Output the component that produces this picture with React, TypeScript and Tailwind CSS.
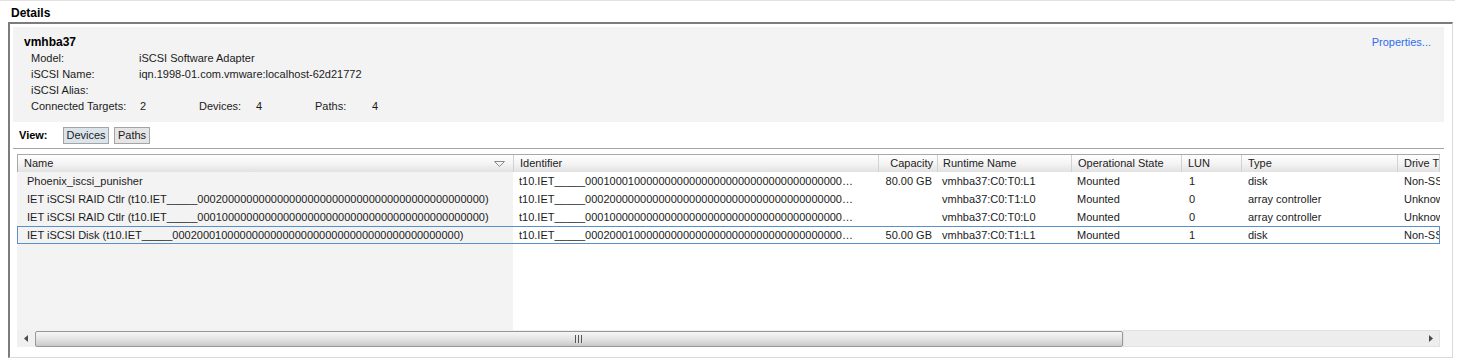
const zeros = (n: number) => "0".repeat(n)

const cols = [
  { label: "Name", w: "w-[496px]", head: "pl-[6px] pr-[8px] justify-between", cell: "pl-[10px] bg-[#f3f3f3]" },
  { label: "Identifier", w: "w-[365px]", head: "pl-[6px]", cell: "pl-[6px] pr-[20px]" },
  { label: "Capacity", w: "w-[59px]", head: "justify-end pr-[4px]", cell: "justify-end pr-[5px]" },
  { label: "Runtime Name", w: "w-[134px]", head: "pl-[5px]", cell: "pl-[5px]" },
  { label: "Operational State", w: "w-[110px]", head: "pl-[6px]", cell: "pl-[6px]" },
  { label: "LUN", w: "w-[60px]", head: "pl-[6px]", cell: "pl-[8px]" },
  { label: "Type", w: "w-[156px]", head: "pl-[6px]", cell: "pl-[7px]" },
  { label: "Drive Type", w: "flex-1", head: "pl-[6px]", cell: "pl-[7px]" },
]

const rows = [
  ["Phoenix_iscsi_punisher", "t10.IET_____00010001" + zeros(40), "80.00 GB", "vmhba37:C0:T0:L1", "Mounted", "1", "disk", "Non-SSD"],
  ["IET iSCSI RAID Ctlr (t10.IET_____0002" + zeros(43) + ")", "t10.IET_____0002" + zeros(44), "", "vmhba37:C0:T1:L0", "Mounted", "0", "array controller", "Unknown"],
  ["IET iSCSI RAID Ctlr (t10.IET_____0001" + zeros(43) + ")", "t10.IET_____0001" + zeros(44), "", "vmhba37:C0:T0:L0", "Mounted", "0", "array controller", "Unknown"],
  ["IET iSCSI Disk (t10.IET_____00020001" + zeros(39) + ")", "t10.IET_____00020001" + zeros(40), "50.00 GB", "vmhba37:C0:T1:L1", "Mounted", "1", "disk", "Non-SSD"],
]

function InfoRow({ label, children }: any) {
  return (
    <div className="flex h-[16px] leading-[16px] pl-[7px]">
      <span className="w-[108px]">{label}</span>
      {children}
    </div>
  )
}

function Scrollbar() {
  return (
    <div className="flex h-[17px] bg-[#f0f0f0]">
      <div className="w-[18px] flex items-center justify-center">
        <svg width="4" height="7" viewBox="0 0 4 7"><polygon points="4,0 0,3.5 4,7" fill="#4a4a4a" /></svg>
      </div>
      <div className="w-[1088px] h-[16px] mt-px border border-[#979797] rounded-[2px] bg-gradient-to-b from-[#f6f6f6] via-[#e4e4e4] to-[#c9c9c9] flex items-center justify-center">
        <svg width="9" height="8" viewBox="0 0 9 8">
          <rect x="0" y="0" width="1" height="8" fill="#555" />
          <rect x="1" y="0" width="1" height="8" fill="#e8e8e8" />
          <rect x="3" y="0" width="1" height="8" fill="#555" />
          <rect x="4" y="0" width="1" height="8" fill="#e8e8e8" />
          <rect x="6" y="0" width="1" height="8" fill="#555" />
          <rect x="7" y="0" width="1" height="8" fill="#e8e8e8" />
        </svg>
      </div>
      <div className="flex-1 border border-[#e2e2e2] bg-[#ededed] flex items-center justify-end pr-[6px]">
        <svg width="4" height="7" viewBox="0 0 4 7"><polygon points="0,0 4,3.5 0,7" fill="#4a4a4a" /></svg>
      </div>
    </div>
  )
}

export default function App() {
  return (
    <div className="w-[1462px] h-[364px] bg-white text-[11px] text-[#1b1b1b] font-['Liberation_Sans',Arial,sans-serif] overflow-hidden">
      <div className="h-px w-[1455px] bg-[#e2e2e2]" />
      <div className="h-[21px] pl-[11px] pt-[3px] flex items-center font-bold text-[12px] text-black">Details</div>

      <div className="ml-[8px] w-[1445px] h-[336px] border-t-2 border-l-2 border-t-[#7c7c7c] border-l-[#7c7c7c] border-r border-b border-r-[#dadada] border-b-[#dadada] pl-[3px] pr-[8px] pt-[3px]">
        {/* adapter summary */}
        <div className="h-[95px] bg-[#f3f3f3] pl-[11px] pr-[13px] pt-[7px] flex justify-between">
          <div>
            <div className="h-[16px] leading-[16px] font-bold text-[12px] text-black">vmhba37</div>
            <InfoRow label="Model:">iSCSI Software Adapter</InfoRow>
            <InfoRow label="iSCSI Name:">iqn.1998-01.com.vmware:localhost-62d21772</InfoRow>
            <InfoRow label="iSCSI Alias:"></InfoRow>
            <InfoRow label="Connected Targets:">
              <span className="w-[60px] pl-px">2</span>
              <span className="w-[57px]">Devices:</span>
              <span className="w-[59px]">4</span>
              <span className="w-[57px]">Paths:</span>
              <span>4</span>
            </InfoRow>
          </div>
          <a className="h-[16px] leading-[16px] text-[#2d6df0] cursor-pointer">Properties...</a>
        </div>

        {/* view switch */}
        <div className="mt-[5px] h-[17px] flex items-center pl-[6px]">
          <span className="w-[44px] font-bold text-black">View:</span>
          <button className="w-[46px] h-[17px] border border-[#a4a4a4] bg-[#dbe3eb] text-[11px] leading-[15px]">Devices</button>
          <button className="ml-[5px] w-[36px] h-[17px] border border-[#a4a4a4] bg-[#e5e5e5] text-[11px] leading-[15px]">Paths</button>
        </div>
        <div className="mt-[4px] h-px bg-[#a6a6a6]" />

        {/* device table */}
        <div className="mt-[5px] mx-[4px] flex flex-col">
          <div className="flex h-[18px] border-t border-l border-[#a9a9a9] bg-gradient-to-b from-white via-[#f4f4f4] to-[#e2e2e2]">
            {cols.map((c) => (
              <div key={c.label} className={`${c.w} ${c.head} flex items-center border-r border-[#d2d2d2] overflow-hidden whitespace-nowrap text-[#222]`}>
                <span>{c.label}</span>
                {c.label === "Name" && (
                  <svg width="11" height="6" viewBox="0 0 11 6"><polygon points="0.5,0.5 10.5,0.5 5.5,5.5" fill="none" stroke="#8a8a8a" /></svg>
                )}
              </div>
            ))}
          </div>
          <div className="h-[158px] flex flex-col">
            {rows.map((r, i) => (
              <div key={i} className={`flex h-[18px] ${i === 3 ? "outline-1 -outline-offset-1 outline-[#5c8fc7]" : ""}`}>
                {cols.map((c, j) => (
                  <div key={j} className={`${c.w} ${c.cell} flex items-center overflow-hidden whitespace-nowrap`}>
                    <span className={j === 1 ? "overflow-hidden text-ellipsis" : ""}>{r[j]}</span>
                  </div>
                ))}
              </div>
            ))}
            <div className="flex-1 flex">
              <div className="w-[496px] bg-[#f3f3f3]" />
              <div className="flex-1" />
            </div>
          </div>
          <Scrollbar />
        </div>
      </div>
    </div>
  )
}
